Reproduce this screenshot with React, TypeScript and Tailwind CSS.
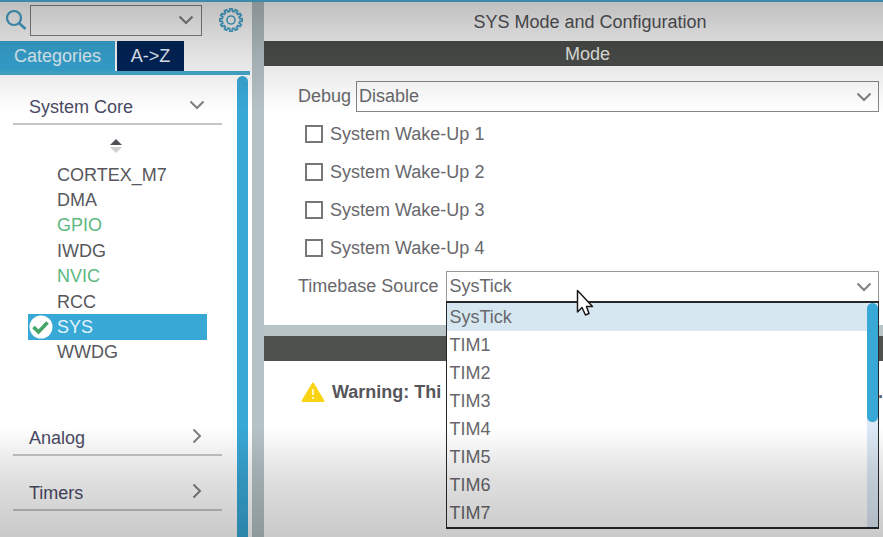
import { useState } from "react";

const peripherals = [
  { name: "CORTEX_M7", color: "text-[#58585c]" },
  { name: "DMA", color: "text-[#58585c]" },
  { name: "GPIO", color: "text-[#5cb880]" },
  { name: "IWDG", color: "text-[#58585c]" },
  { name: "NVIC", color: "text-[#5cb880]" },
  { name: "RCC", color: "text-[#58585c]" },
  { name: "SYS", color: "text-[#e2f4fc]" },
  { name: "WWDG", color: "text-[#58585c]" },
];

const timebaseSources = ["SysTick", "TIM1", "TIM2", "TIM3", "TIM4", "TIM5", "TIM6", "TIM7"];

function Chevron({ className = "" }: { className?: string }) {
  return (
    <svg viewBox="0 0 16 10" className={`h-[10px] w-4 fill-none stroke-[#808084] stroke-2 ${className}`} aria-hidden="true">
      <path d="M1.500 1.500 8 8 14.500 1.500" />
    </svg>
  );
}

function Gear() {
  const teeth = 12;
  const points: string[] = [];
  for (let i = 0; i < teeth; i++) {
    const corners: [number, number][] = [
      [-0.3, 8.8],
      [-0.21, 11.2],
      [0.21, 11.2],
      [0.3, 8.8],
    ];
    for (const [offset, radius] of corners) {
      const angle = ((i + offset) / teeth) * Math.PI * 2;
      points.push(`${(12 + radius * Math.sin(angle)).toFixed(2)},${(12 - radius * Math.cos(angle)).toFixed(2)}`);
    }
  }
  return (
    <svg viewBox="0 0 24 24" className="size-6 fill-none stroke-[#48a8d0]" aria-hidden="true">
      <polygon points={points.join(" ")} strokeWidth="1.800" strokeLinejoin="round" />
      <circle cx="12" cy="12" r="4" strokeWidth="1.600" />
    </svg>
  );
}

function Section({ title, open = false }: { title: string; open?: boolean }) {
  return (
    <button
      type="button"
      aria-expanded={open}
      className="flex h-9 w-full items-center justify-between border-b-2 border-[#c4c6c8] pt-0.5 pr-[17px] pl-4 text-left text-[#4a4a66]"
    >
      {title}
      <Chevron className={open ? "-translate-y-0.5" : "-translate-y-0.5 -rotate-90"} />
    </button>
  );
}

function Sidebar() {
  return (
    <aside className="flex w-[252px] shrink-0 flex-col">
      <div className="flex h-[39px] items-center pt-[2px] pb-[5px]">
        <svg viewBox="0 0 22 22" className="ml-[5px] size-[22px] fill-none stroke-[#48a4cc]" aria-hidden="true">
          <circle cx="9" cy="9" r="7" strokeWidth="2.200" />
          <path d="m14 14 6.500 6" strokeWidth="2.600" />
        </svg>
        <div className="ml-[3px] flex h-[31px] w-[172px] items-center border border-[#858585]">
          <input aria-label="Search peripherals" className="h-full min-w-0 flex-1 bg-transparent px-1 outline-none" />
          <button type="button" aria-label="Show search history" className="px-[7px]">
            <Chevron />
          </button>
        </div>
        <button type="button" aria-label="Settings" className="ml-[17px]">
          <Gear />
        </button>
      </div>
      <div role="tablist" className="flex h-[34px] w-[250px] items-stretch gap-0.5 border-b-4 border-[#46aacd]">
        <button role="tab" aria-selected="true" type="button" className="w-[115px] bg-[#38a8d6] text-[#e2f6ff]">
          Categories
        </button>
        <button role="tab" aria-selected="false" type="button" className="w-[67px] bg-[#00255a] text-[#eef4ff]">
          A-&gt;Z
        </button>
      </div>
      <div className="flex min-h-0 flex-1">
        <div className="min-w-0 flex-1 pt-[14px] pr-[15px] pl-[13px]">
          <Section title="System Core" open />
          <div className="flex h-[37px] items-end pb-1 pl-[97px]">
            <svg viewBox="0 0 12 16" className="mb-1 h-4 w-3" aria-hidden="true">
              <path d="M0 7 6 1 12 7Z" fill="#515156" />
              <path d="M0 9H12L6 15Z" fill="#d0d0d2" />
            </svg>
          </div>
          <ul className="mr-[15px] ml-[15px] grid h-[203px] grid-rows-8">
            {peripherals.map(({ name, color }) => (
              <li key={name} className="flex">
                <button
                  type="button"
                  className={`flex flex-1 items-center text-left leading-5 ${color} ${name === "SYS" ? "bg-[#38a8d6]" : ""}`}
                >
                  <span className="w-[29px]">
                    {name === "SYS" && (
                      <svg viewBox="0 0 24 24" className="ml-px size-6" aria-hidden="true">
                        <circle cx="12" cy="12" r="11.500" fill="#fff" />
                        <path d="m4.500 12 5 5 9-9.500" fill="none" stroke="#43a566" strokeWidth="3.600" />
                      </svg>
                    )}
                  </span>
                  {name}
                </button>
              </li>
            ))}
          </ul>
          <div className="flex flex-col gap-[19px] pt-[55px]">
            <Section title="Analog" />
            <Section title="Timers" />
          </div>
        </div>
        <div className="mt-px mr-1 w-[11px] rounded-t-md bg-[#38a8d6]" />
      </div>
    </aside>
  );
}

function TimebaseSelect() {
  const [source, setSource] = useState("SysTick");
  return (
    <div className="relative ml-2 flex-1">
      <select
        id="timebase"
        value={source}
        onChange={(event) => setSource(event.target.value)}
        className="block h-[31px] w-full appearance-none border border-[#9a9a9a] bg-white px-[2px] outline-none"
      >
        {timebaseSources.map((name) => (
          <option key={name}>{name}</option>
        ))}
      </select>
      <Chevron className="pointer-events-none absolute top-[11px] right-[7px]" />
      <div className="absolute top-[30px] left-0 z-10 flex h-[228px] w-full border-x border-y-2 border-[#26282a] bg-white">
        <ul role="listbox" aria-label="Timebase sources" className="flex-1">
          {timebaseSources.map((name) => (
            <li
              key={name}
              role="option"
              aria-selected={name === source}
              onClick={() => setSource(name)}
              className={`h-7 pl-[2px] leading-7 ${name === source ? "bg-[#d6e7f2]" : ""}`}
            >
              {name}
            </li>
          ))}
        </ul>
        <div className="w-[11px] bg-[#dce8f5]">
          <div className="h-[119px] rounded-md bg-[#38a8d6]" />
        </div>
      </div>
      <svg viewBox="0 0 18 28" className="absolute top-[18px] left-[130px] z-20 h-7 w-[18px]" aria-hidden="true">
        <path
          d="M1.500 1.500V23L6 18.500 9.500 26 13 24.500 10.500 17.500H16.500Z"
          fill="#fff"
          stroke="#1d1818"
          strokeWidth="1.500"
          strokeLinejoin="round"
        />
      </svg>
    </div>
  );
}

function Configuration() {
  return (
    <main className="flex min-w-0 flex-1 flex-col border-l-12 border-[#b5c2c6]">
      <h1 className="h-[39px] pl-[33px] text-center leading-10 text-[#55555a]">SYS Mode and Configuration</h1>
      <h2 className="h-[25px] bg-[#4b4e4b] pl-7 text-center leading-[26px] text-[#eeeeea]">Mode</h2>
      <form className="h-[259px] pt-[11px] pr-[4px] pl-[34px] text-[#68686c]">
        <div className="flex h-[38px] items-center">
          <label htmlFor="debug">Debug</label>
          <div className="relative ml-[5px] flex-1">
            <select
              id="debug"
              className="block h-[31px] w-full appearance-none border border-[#858585] bg-transparent px-[2px] outline-none"
            >
              <option>Disable</option>
            </select>
            <Chevron className="pointer-events-none absolute top-[11px] right-[7px]" />
          </div>
        </div>
        {[1, 2, 3, 4].map((pin) => (
          <label key={pin} className="flex h-[38px] items-center gap-[7px] pl-[7px]">
            <input type="checkbox" className="size-[18px] appearance-none border-2 border-[#77777a] bg-white checked:bg-[#38a8d6]" />
            System Wake-Up {pin}
          </label>
        ))}
        <div className="flex h-[38px] items-center">
          <label htmlFor="timebase">Timebase Source</label>
          <TimebaseSelect />
        </div>
      </form>
      <div className="h-[11px] bg-[#b9c4c7]" />
      <div className="h-[25px] bg-[#4e524d]" />
      <p className="flex h-[62px] items-center pl-[37px] font-bold whitespace-nowrap text-[#55555a]">
        <svg viewBox="0 0 24 20" className="mr-[7px] h-5 w-6 shrink-0" aria-hidden="true">
          <path d="M12 1.500 22.500 19H1.500Z" fill="#fad414" stroke="#fad414" strokeWidth="2" strokeLinejoin="round" />
          <path d="M12 7V13M12 15V17" stroke="#fff5c0" strokeWidth="2" />
        </svg>
        <span>Warning: Thi</span>
        <span className="ml-auto">.</span>
      </p>
    </main>
  );
}

export default function App() {
  return (
    <div className="relative flex h-screen overflow-hidden border-t-2 border-[#3d8ba8] bg-white font-['Liberation_Sans',Arial,sans-serif] text-[18px]">
      <Sidebar />
      <Configuration />
      <div className="pointer-events-none absolute inset-x-0 top-0 z-30 h-[110px] bg-linear-to-b from-black/25 via-black/12 via-45% to-transparent" />
      <div className="pointer-events-none absolute inset-x-0 bottom-0 z-30 h-[110px] bg-linear-to-t from-black/21 via-black/12 via-55% to-transparent" />
    </div>
  );
}
